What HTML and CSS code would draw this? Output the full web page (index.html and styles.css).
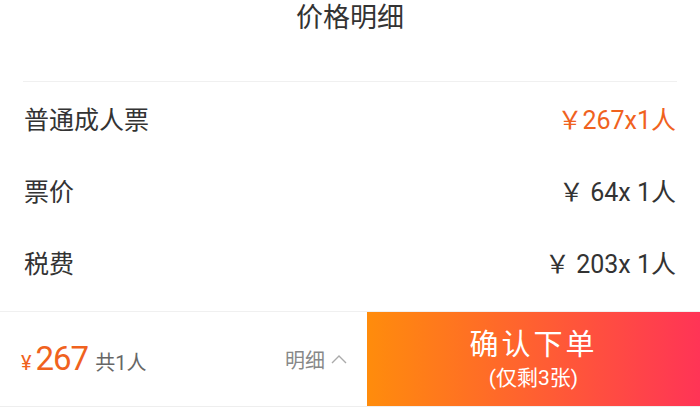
FILE: index.html
```html
<!DOCTYPE html>
<html lang="zh-CN">
<head>
    <meta charset="UTF-8">
    <meta name="viewport" content="width=device-width, initial-scale=1.0">
    <title>价格明细</title>
    <link rel="stylesheet" href="styles.css">
</head>
<body>
    <div class="sheet">
        <h1 class="sheet-title">价格明细</h1>
        <div class="divider"></div>

        <div class="rows">
            <div class="row">
                <span class="label">普通成人票</span>
                <span class="value accent">￥267x1人</span>
            </div>
            <div class="row">
                <span class="label">票价</span>
                <span class="value">￥ 64x 1人</span>
            </div>
            <div class="row">
                <span class="label">税费</span>
                <span class="value">￥ 203x 1人</span>
            </div>
        </div>

        <div class="footer">
            <div class="total">
                <div class="price">
                    <span class="yen">¥</span><span class="amount">267</span>
                    <span class="count">共1人</span>
                </div>
                <div class="detail-toggle">
                    明细
                    <svg width="16" height="10" viewBox="0 0 16 10">
                        <path d="M1 9 L8 2 L15 9" fill="none" stroke="#aaa" stroke-width="1.4"/>
                    </svg>
                </div>
            </div>
            <button class="submit">
                <span class="submit-main">确认下单</span>
                <span class="submit-sub">(仅剩3张)</span>
            </button>
        </div>
    </div>
</body>
</html>
```

FILE: styles.css
```css
body {
    margin: 0;
    background: #fff;
    font-family: Roboto, "Noto Sans CJK SC", sans-serif;
    color: #333;
}
.sheet {
    width: 700px;
    height: 408px;
    display: flex;
    flex-direction: column;
    overflow: hidden;
}
.sheet-title {
    margin: 0;
    height: 81px;
    font-size: 27px;
    font-weight: normal;
    line-height: 36px;
    text-align: center;
    color: #333;
}
.divider {
    height: 1px;
    margin: 0 23px;
    background: #f0f0f0;
}
.rows {
    padding: 0 24px;
    margin-bottom: 13px;
}
.row {
    height: 72px;
    display: flex;
    justify-content: space-between;
    align-items: center;
    font-size: 25px;
}
.value {
    font-size: 25px;
}
.accent {
    color: #f0621e;
}
.footer {
    display: flex;
    height: 94px;
    border-top: 1px solid #f0f0f0;
    border-bottom: 1px solid #eee;
}
.total {
    width: 367px;
    box-sizing: border-box;
    padding: 0 20px 0 21px;
    display: flex;
    justify-content: space-between;
    align-items: center;
}
.price {
    display: flex;
    align-items: baseline;
    color: #f0621e;
}
.yen {
    font-size: 20px;
    margin-right: 4px;
}
.amount {
    font-size: 33px;
    letter-spacing: -1px;
    line-height: 1;
}
.count {
    font-size: 20px;
    color: #666;
    margin-left: 7px;
}
.detail-toggle {
    display: flex;
    align-items: center;
    gap: 6px;
    font-size: 20px;
    color: #888;
}
.submit {
    flex: 1;
    border: none;
    padding: 0;
    color: #fff;
    background: linear-gradient(to right, #ff8c0c, #ff3456);
    display: flex;
    flex-direction: column;
    align-items: center;
    justify-content: center;
    font-family: inherit;
}
.submit-main {
    font-size: 29px;
    letter-spacing: 3px;
    line-height: 36px;
}
.submit-sub {
    font-size: 21px;
    line-height: 26px;
    margin-top: 2px;
}
```
